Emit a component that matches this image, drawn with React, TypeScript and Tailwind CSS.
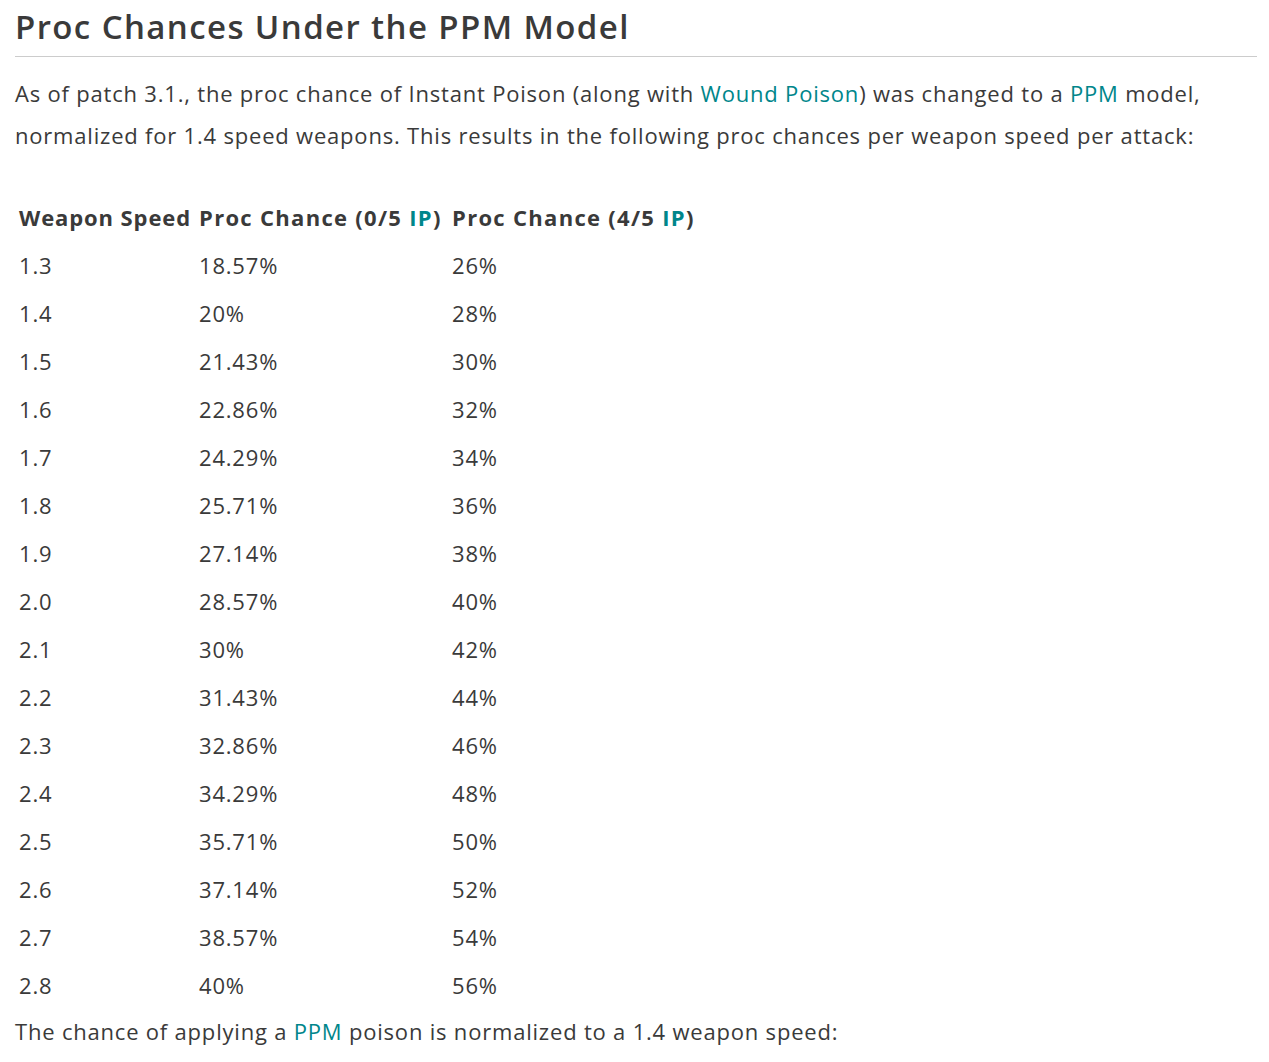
const rows: [string, string, string][] = [
  ["1.3", "18.57%", "26%"],
  ["1.4", "20%", "28%"],
  ["1.5", "21.43%", "30%"],
  ["1.6", "22.86%", "32%"],
  ["1.7", "24.29%", "34%"],
  ["1.8", "25.71%", "36%"],
  ["1.9", "27.14%", "38%"],
  ["2.0", "28.57%", "40%"],
  ["2.1", "30%", "42%"],
  ["2.2", "31.43%", "44%"],
  ["2.3", "32.86%", "46%"],
  ["2.4", "34.29%", "48%"],
  ["2.5", "35.71%", "50%"],
  ["2.6", "37.14%", "52%"],
  ["2.7", "38.57%", "54%"],
  ["2.8", "40%", "56%"],
];

const Link = ({ children }: { children: React.ReactNode }) => (
  <a href="#" className="text-[#00868b]">{children}</a>
);

export default function App() {
  return (
    <div className="bg-white min-h-screen px-[15px] pr-[12px] text-[#3a3a3a] font-['Open_Sans',sans-serif]">
      <h2 className="text-[33px] font-semibold leading-[54px] tracking-[1.4px] border-b border-[#cccccc] pb-[2px]">
        Proc Chances Under the PPM Model
      </h2>
      <p className="text-[22px] leading-[42px] tracking-[0.8px] mt-[15px]">
        As of patch 3.1., the proc chance of Instant Poison (along with <Link>Wound Poison</Link>) was changed to a{" "}
        <Link>PPM</Link> model,
        <br />
        normalized for 1.4 speed weapons. This results in the following proc chances per weapon speed per attack:
      </p>
      <table className="mt-[37px] text-[22px] tracking-[0.8px] border-collapse">
        <thead>
          <tr>
            <th className="text-left font-bold px-[4px] h-[48px] w-[178px] tracking-[0.9px] whitespace-nowrap">
              Weapon Speed
            </th>
            <th className="text-left font-bold px-[4px] h-[48px] w-[253px] tracking-[1.3px] whitespace-nowrap">
              Proc Chance (0/5 <Link>IP</Link>)
            </th>
            <th className="text-left font-bold px-[4px] h-[48px] tracking-[1.3px] whitespace-nowrap">
              Proc Chance (4/5 <Link>IP</Link>)
            </th>
          </tr>
        </thead>
        <tbody>
          {rows.map(([a, b, c]) => (
            <tr key={a}>
              <td className="px-[4px] h-[48px]">{a}</td>
              <td className="px-[4px] h-[48px]">{b}</td>
              <td className="px-[4px] h-[48px]">{c}</td>
            </tr>
          ))}
        </tbody>
      </table>
      <p className="text-[22px] leading-[42px] tracking-[0.8px] mt-[1px]">
        The chance of applying a <Link>PPM</Link> poison is normalized to a 1.4 weapon speed:
      </p>
    </div>
  );
}
